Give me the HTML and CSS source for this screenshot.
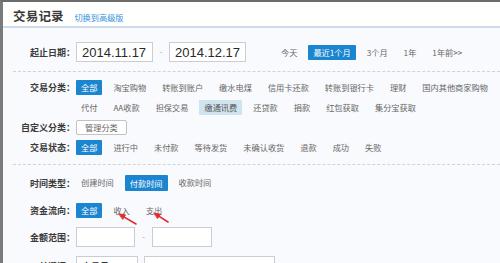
FILE: index.html
```html
<!DOCTYPE html>
<html lang="zh-CN">
<head>
<meta charset="utf-8">
<title>交易记录</title>
<link rel="stylesheet" href="styles.css">
</head>
<body>
<div class="page">
  <header class="head">
    <h1 class="title">交易记录</h1>
    <a class="switch" href="#">切换到高级版</a>
  </header>

  <section class="sec sec-date">
    <div class="row">
      <span class="lbl">起止日期：</span>
      <div class="range">
        <input class="inp date" value="2014.11.17">
        <span class="dash">-</span>
        <input class="inp date" value="2014.12.17">
      </div>
      <ul class="opts quick">
        <li>今天</li>
        <li class="on">最近1个月</li>
        <li>3个月</li>
        <li>1年</li>
        <li>1年前&gt;&gt;</li>
      </ul>
    </div>
  </section>

  <section class="sec sec-cat">
    <div class="row top">
      <span class="lbl">交易分类：</span>
      <ul class="opts">
        <li class="on">全部</li>
        <li>淘宝购物</li>
        <li>转账到账户</li>
        <li>缴水电煤</li>
        <li>信用卡还款</li>
        <li>转账到银行卡</li>
        <li>理财</li>
        <li>国内其他商家购物</li>
        <li>代付</li>
        <li>AA收款</li>
        <li>担保交易</li>
        <li class="hl">缴通讯费</li>
        <li>还贷款</li>
        <li>捐款</li>
        <li>红包获取</li>
        <li>集分宝获取</li>
      </ul>
    </div>
    <div class="row gap5">
      <span class="lbl">自定义分类：</span>
      <button class="btn-manage" type="button">管理分类</button>
    </div>
    <div class="row gap5">
      <span class="lbl">交易状态：</span>
      <ul class="opts">
        <li class="on">全部</li>
        <li>进行中</li>
        <li>未付款</li>
        <li>等待发货</li>
        <li>未确认收货</li>
        <li>退款</li>
        <li>成功</li>
        <li>失败</li>
      </ul>
    </div>
  </section>

  <section class="sec sec-flow">
    <div class="row tall">
      <span class="lbl">时间类型：</span>
      <ul class="opts">
        <li>创建时间</li>
        <li class="on big">付款时间</li>
        <li>收款时间</li>
      </ul>
    </div>
    <div class="row tall gap7">
      <span class="lbl">资金流向：</span>
      <ul class="opts">
        <li class="on">全部</li>
        <li>收入</li>
        <li>支出</li>
      </ul>
    </div>
    <div class="row tall gap7">
      <span class="lbl">金额范围：</span>
      <div class="range">
        <input class="inp amount">
        <span class="dash dash-amt">-</span>
        <input class="inp amount amount2">
      </div>
    </div>
    <div class="row tall gap9">
      <span class="lbl">关键词：</span>
      <div class="select">
        <span>交易号</span>
        <svg class="caret" width="7" height="5" viewBox="0 0 7 5"><path d="M0.5 0.8 L3.5 4 L6.5 0.8" fill="none" stroke="#666" stroke-width="1"/></svg>
      </div>
      <input class="inp keyword" placeholder="交易号或商品名称">
    </div>
  </section>

  <svg class="arrows" width="500" height="263" viewBox="0 0 500 263">
    <g stroke="#e42a2a" stroke-width="1.6" stroke-linecap="round" fill="#e42a2a">
      <line x1="136" y1="224" x2="123" y2="216.4"/>
      <polygon points="119,214 125.5,214.8 122.9,219.2" stroke-width="0.8"/>
      <line x1="168" y1="222" x2="158" y2="215.6"/>
      <polygon points="154,213 160.4,214.2 157.7,218.4" stroke-width="0.8"/>
    </g>
  </svg>
</div>
</body>
</html>
```

FILE: styles.css
```css
* {
  box-sizing: border-box;
  margin: 0;
  padding: 0;
}

html, body {
  height: 263px;
  overflow: hidden;
}

body {
  margin: 0;
  background: #f8fafd;
  font-family: "Noto Sans CJK SC", "Noto Sans", sans-serif;
  color: #555;
}

.page {
  position: relative;
  height: 263px;
  border-top: 2px solid #6b6b6b;
  border-left: 3px solid #7a7a7a;
}

.head {
  height: 26px;
  line-height: 24px;
  padding-left: 10px;
  background: #fffffd;
  border-bottom: 2px solid #cddcea;
  white-space: nowrap;
}

.title {
  display: inline;
  font-size: 12.5px;
  font-weight: bold;
  color: #3a3a3a;
  letter-spacing: 0.2px;
}

.switch {
  margin-left: 7px;
  font-size: 8.2px;
  color: #3590dc;
  text-decoration: none;
}

.sec {
  margin-left: 10px;
  border-bottom: 1px dashed #cfd4d9;
}

.sec-date {
  padding: 14px 0 9px;
}

.sec-cat {
  padding: 8px 0 9px;
}

.sec-flow {
  padding-top: 8px;
  border-bottom: none;
}

.row {
  display: flex;
  align-items: center;
}

.row.top {
  align-items: flex-start;
}

.row.tall {
  height: 20px;
}

.gap5 {
  margin-top: 5px;
}

.gap7 {
  margin-top: 7px;
}

.gap9 {
  margin-top: 9px;
}

.lbl {
  flex: none;
  width: 62px;
  text-align: right;
  font-size: 9px;
  line-height: 15px;
  font-weight: bold;
  color: #3a3a3a;
  white-space: nowrap;
}

.range {
  display: flex;
  align-items: center;
  margin-left: 1px;
}

.inp {
  display: block;
  height: 20px;
  border: 1px solid #cbcdd0;
  background: #fff;
  outline: none;
  font-family: "Liberation Sans", Arial, sans-serif;
  color: #2a2a2a;
}

.date {
  width: 77px;
  padding: 0 5px;
  font-size: 13px;
}

.dash {
  width: 16px;
  text-align: center;
  font-family: "Liberation Sans", Arial, sans-serif;
  font-size: 9px;
  color: #b8b8b8;
}

.dash-amt {
  width: 17px;
}

.amount {
  width: 59px;
}

.amount2 {
  width: 60px;
}

.opts {
  display: flex;
  flex-wrap: wrap;
  gap: 5px 6px;
  list-style: none;
  margin-left: 1px;
}

.opts li {
  height: 15px;
  line-height: 15px;
  padding: 0 5px;
  font-size: 8.2px;
  color: #666;
  white-space: nowrap;
}

.opts li.on {
  background: #1b85d0;
  color: #fff;
  border-radius: 1px;
}

.opts li.big {
  height: 16px;
  line-height: 16px;
}

.opts li.hl {
  background: #cfe4ef;
  color: #555;
}

.quick {
  margin-left: 30px;
}

.btn-manage {
  margin-left: 1px;
  height: 15px;
  padding: 0 8px;
  border: 1px solid #c2c2c2;
  border-radius: 2px;
  background: #fff;
  font-family: "Noto Sans CJK SC", sans-serif;
  font-size: 8.2px;
  line-height: 13px;
  color: #666;
}

.select {
  display: flex;
  align-items: center;
  justify-content: space-between;
  margin-left: 1px;
  width: 62px;
  height: 20px;
  padding: 0 4px 0 5px;
  border: 1px solid #cbcdd0;
  background: #fff;
  font-size: 9px;
  font-weight: bold;
  color: #333;
}

.keyword {
  width: 131px;
  margin-left: 6px;
  padding: 0 7px;
  font-family: "Noto Sans CJK SC", sans-serif;
  font-size: 8.2px;
}

.keyword::placeholder {
  color: #b5b5b5;
}

.arrows {
  position: absolute;
  left: -3px;
  top: -2px;
  pointer-events: none;
}
```
